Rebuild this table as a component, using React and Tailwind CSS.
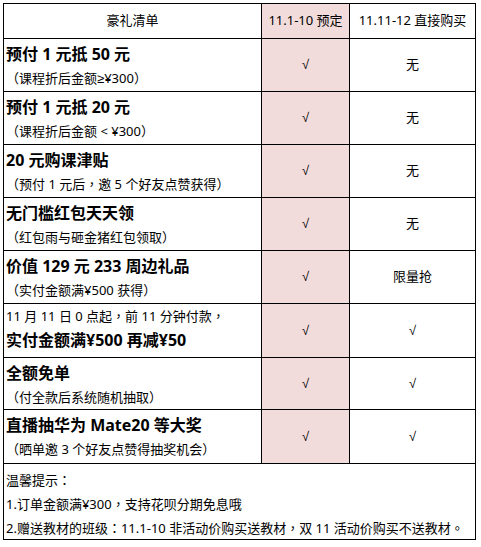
import React from "react";

const FONT = { fontFamily: '"Noto Sans", "Noto Sans CJK SC", sans-serif' };

function T({ text }) {
  const parts = [];
  let buf = "";
  const flush = () => {
    if (buf) parts.push(buf);
    buf = "";
  };
  for (const ch of text) {
    if ("（）：，。".includes(ch)) {
      flush();
      parts.push(
        <span key={parts.length} className="font-['Noto_Sans_CJK_TC']">
          {ch}
        </span>
      );
    } else if ("≥√".includes(ch)) {
      flush();
      parts.push(
        <span key={parts.length} className="font-['Liberation_Sans']">
          {ch}
        </span>
      );
    } else buf += ch;
  }
  flush();
  return <>{parts}</>;
}

const rows = [
  { h: "h-[53px]", title: "预付 1 元抵 50 元", sub: "（课程折后金额≥¥300）", c3: "无" },
  { h: "h-[53px]", title: "预付 1 元抵 20 元", sub: "（课程折后金额 < ¥300）", c3: "无" },
  { h: "h-[53px]", title: "20 元购课津贴", sub: "（预付 1 元后，邀 5 个好友点赞获得）", c3: "无" },
  { h: "h-[53px]", title: "无门槛红包天天领", sub: "（红包雨与砸金猪红包领取）", c3: "无" },
  { h: "h-[53px]", title: "价值 129 元 233 周边礼品", sub: "（实付金额满¥500 获得）", c3: "限量抢" },
  { h: "h-[54px]", pre: "11 月 11 日 0 点起，前 11 分钟付款，", title: "实付金额满¥500 再减¥50", c3: "√" },
  { h: "h-[52px]", title: "全额免单", sub: "（付全款后系统随机抽取）", c3: "√" },
  { h: "h-[54px]", title: "直播抽华为 Mate20 等大奖", sub: "（晒单邀 3 个好友点赞得抽奖机会）", c3: "√" },
];

export default function App() {
  return (
    <div className="bg-white w-[481px] h-[547px] pl-[3px] pt-[3px] text-black" style={FONT}>
      <div className="w-[473px] border-l border-t border-black">
        <div className="grid grid-cols-[258px_88px_126px] h-[35px] text-[13px]">
          <div className="border-r border-b border-black flex items-center justify-center">豪礼清单</div>
          <div className="border-r border-b border-black bg-[#f2dcdb] flex items-center justify-center">11.1-10 预定</div>
          <div className="border-r border-b border-black flex items-center justify-center">11.11-12 直接购买</div>
        </div>
        {rows.map((r, i) => (
          <div key={i} className={`grid grid-cols-[258px_88px_126px] ${r.h}`}>
            <div className={`border-r border-b border-black pl-[2px] ${r.pre ? "pt-0" : "pt-[3px]"}`}>
              {r.pre ? (
                <>
                  <div className="text-[13px] leading-[24px] whitespace-nowrap"><T text={r.pre} /></div>
                  <div className="text-[16px] font-bold leading-[25px] whitespace-nowrap">{r.title}</div>
                </>
              ) : (
                <>
                  <div className="text-[16px] font-bold leading-[24px] whitespace-nowrap">{r.title}</div>
                  <div className="text-[13px] leading-[24px] whitespace-nowrap"><T text={r.sub} /></div>
                </>
              )}
            </div>
            <div className="border-r border-b border-black bg-[#f2dcdb] flex items-center justify-center text-[13px]"><T text="√" /></div>
            <div className="border-r border-b border-black flex items-center justify-center text-[13px]"><T text={r.c3} /></div>
          </div>
        ))}
        <div className="h-[76px] border-r border-b border-black pl-[2px] pt-[4px] text-[13px] leading-[23px] whitespace-nowrap">
          <div><T text="温馨提示：" /></div>
          <div><T text="1.订单金额满¥300，支持花呗分期免息哦" /></div>
          <div><T text="2.赠送教材的班级：11.1-10 非活动价购买送教材，双 11 活动价购买不送教材。" /></div>
        </div>
      </div>
    </div>
  );
}
